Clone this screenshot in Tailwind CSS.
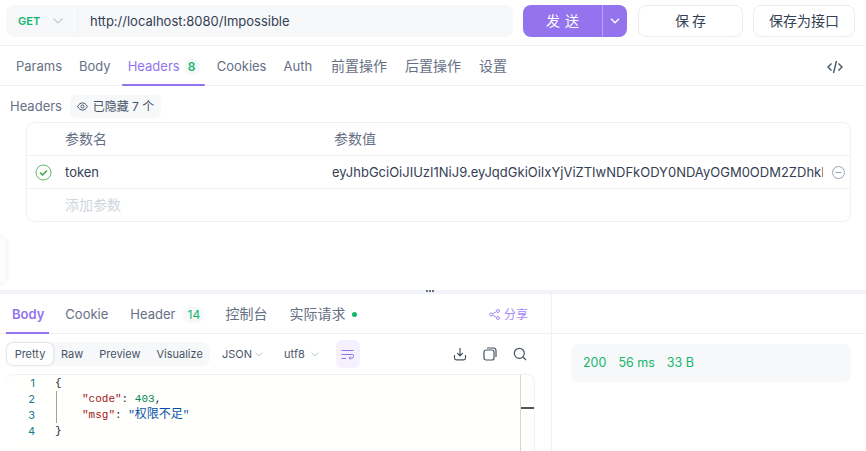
<!DOCTYPE html>
<html lang="en">
<head>
  <meta charset="UTF-8">
  <title>Request</title>
  <script src="https://cdn.jsdelivr.net/npm/@tailwindcss/browser@4"></script>
</head>
<body class="bg-white w-[866px] h-[451px] overflow-hidden relative text-[13px] text-[#667085] font-['Inter','Noto_Sans_CJK_SC',sans-serif]">

  <!-- url bar -->
  <div class="h-[46px] border-b border-[#f0f1f5] flex items-start pt-[5px] pl-[6px]">
    <div class="w-[507px] h-[32px] bg-[#f7f8fa] rounded-lg flex items-center">
      <div class="w-[72px] h-full border-r border-[#f2f3f5] flex items-center pl-[12px] gap-[13px] shrink-0">
        <span class="text-[11px] font-semibold text-[#12b76a]">GET</span>
        <svg width="10" height="6" viewBox="0 0 10 6" fill="none" stroke="#c4c8d0" stroke-width="1.1"><path d="M.5.5 5 5 9.5.5"/></svg>
      </div>
      <span class="pl-[12px] pt-[1px] text-[#344054]">http://localhost:8080/Impossible</span>
    </div>
    <div class="ml-[10px] w-[104px] h-[32px] bg-[#9373ee] rounded-lg flex text-white text-[14px]">
      <div class="w-[80px] flex items-center justify-center border-r border-[#b7a3f5] tracking-[5px] pl-[5px] pb-[2px]">发送</div>
      <div class="flex-1 flex items-center justify-center">
        <svg width="10" height="6" viewBox="0 0 10 6" fill="none" stroke="white" stroke-width="1.4"><path d="M1 .8 5 4.8 9 .8"/></svg>
      </div>
    </div>
    <div class="ml-[11px] w-[105px] h-[32px] border border-[#eaecf0] rounded-lg flex items-center justify-center text-[#344054] text-[14px] tracking-[3px] pl-[3px] pb-[2px]">保存</div>
    <div class="ml-[10px] w-[102px] h-[32px] border border-[#eaecf0] rounded-lg flex items-center justify-center text-[#344054] text-[14px] pb-[2px]">保存为接口</div>
  </div>

  <!-- request tabs -->
  <div class="h-[40px] border-b border-[#f0f1f5] flex items-center pt-[2px] pl-[16px] pr-[23px] relative">
    <span class="mr-[17px]">Params</span>
    <span class="mr-[17px]">Body</span>
    <span class="text-[#9373ee]">Headers</span>
    <span class="ml-[4px] w-[16px] h-[16px] rounded-full bg-[#f7f8fa] text-[#12b76a] text-[12px] font-semibold flex items-center justify-center mr-[17px]">8</span>
    <span class="mr-[17px]">Cookies</span>
    <span class="mr-[19px]">Auth</span>
    <span class="mr-[18px] text-[14px] pb-[2px]">前置操作</span>
    <span class="mr-[18px] text-[14px] pb-[2px]">后置操作</span>
    <span class="text-[14px] pb-[2px]">设置</span>
    <svg class="ml-auto" width="16" height="14" viewBox="0 0 16 14" fill="none" stroke="#475467" stroke-width="1.4"><path d="M4.5 3.5 1 7l3.5 3.5M11.5 3.5 15 7l-3.5 3.5M9.5 1 6.5 13"/></svg>
    <div class="absolute left-[122px] bottom-[-1px] w-[83px] h-[2px] bg-[#9373ee] rounded-full"></div>
  </div>

  <!-- hidden headers -->
  <div class="h-[36px] flex items-center pl-[10px] pt-[5px]">
    <span class="pt-[1px]">Headers</span>
    <div class="ml-[8px] h-[23px] w-[91px] bg-[#f7f8fa] rounded-md flex items-center justify-center gap-[5px] text-[#475467] text-[12px]">
      <svg width="11" height="9" viewBox="0 0 11 9" fill="none" stroke="#475467" stroke-width="1"><path d="M.6 4.5C2 2 3.6.9 5.5.9S9 2 10.400 4.5C9 7 7.400 8.100 5.500 8.100S2 7 .6 4.5Z"/><circle cx="5.5" cy="4.5" r="1.6"/></svg>
      <span>已隐藏 7 个</span>
    </div>
  </div>

  <!-- table -->
  <div class="ml-[26px] w-[825px] h-[100px] border border-[#f0f1f5] rounded-lg">
    <div class="h-[33px] border-b border-[#f0f1f5] flex items-center pl-[38px] pb-[2px] text-[14px]">
      <span class="w-[269px]">参数名</span>
      <span>参数值</span>
    </div>
    <div class="h-[33px] border-b border-[#f0f1f5] flex items-center pl-[8px]">
      <svg class="shrink-0" width="17" height="17" viewBox="0 0 17 17" fill="none"><circle cx="8.5" cy="8.5" r="7.5" stroke="#5cb85c" stroke-width="1"/><path d="M5 8.5 7.500 11 12 6.500" stroke="#3fa14a" stroke-width="1.5"/></svg>
      <span class="ml-[13px] w-[268px] pt-[1px] text-[#344054] shrink-0">token</span>
      <span class="w-[491px] pt-[1px] overflow-hidden whitespace-nowrap text-[#344054] shrink-0 ml-[-1px]">eyJhbGciOiJIUzI1NiJ9.eyJqdGkiOiIxYjViZTIwNDFkODY0NDAyOGM0ODM2ZDhkNjY</span>
      <svg class="ml-[9px] shrink-0" width="13" height="13" viewBox="0 0 13 13" fill="none" stroke="#98a2b3" stroke-width="1"><circle cx="6.5" cy="6.5" r="6"/><path d="M3.5 6.5h6"/></svg>
    </div>
    <div class="h-[32px] flex items-center pl-[38px] pb-[2px] text-[#d0d5dd] text-[14px]">添加参数</div>
  </div>

  <!-- floating handle at left edge -->
  <div class="absolute left-[-8px] top-[237px] w-[14px] h-[46px] rounded-md bg-[#fdfdfe] shadow-[0_0_4px_rgba(16,24,40,0.10)]"></div>

  <!-- splitter -->
  <div class="absolute left-0 top-[290px] w-full h-[4px] bg-[#f2f3f7]">
    <div class="absolute left-[426px] top-[0px] flex gap-[1px]">
      <i class="block w-[2px] h-[2px] bg-[#667085]"></i><i class="block w-[2px] h-[2px] bg-[#667085]"></i><i class="block w-[2px] h-[2px] bg-[#667085]"></i>
    </div>
  </div>

  <!-- response -->
  <div class="absolute left-0 top-[294px] w-full h-[157px] flex">
    <div class="w-[552px] border-r border-[#f0f1f5] shrink-0">
      <div class="h-[40px] border-b border-[#f0f1f5] flex items-center pt-[2px] pl-[12px] pr-[23px] relative">
        <span class="text-[#9373ee] font-semibold mr-[21px]">Body</span>
        <span class="mr-[22px]">Cookie</span>
        <span>Header</span>
        <span class="ml-[8px] w-[21px] h-[16px] rounded-full bg-[#f7f8fa] text-[#12b76a] text-[12px] flex items-center justify-center mr-[21px]">14</span>
        <span class="mr-[22px] text-[14px] pb-[2px]">控制台</span>
        <span class="text-[14px] pb-[2px]">实际请求</span>
        <i class="block ml-[7px] w-[5px] h-[5px] rounded-full bg-[#12b76a]"></i>
        <div class="ml-auto flex items-center gap-[4px] text-[#a78bfa] text-[12px]">
          <svg width="11" height="11" viewBox="0 0 11 11" fill="none" stroke="#a78bfa" stroke-width="1"><circle cx="2" cy="5.5" r="1.5"/><circle cx="9" cy="2" r="1.5"/><circle cx="9" cy="9" r="1.5"/><path d="M3.400 4.800 7.600 2.700M3.400 6.200l4.200 2.100"/></svg>
          <span>分享</span>
        </div>
        <div class="absolute left-[6px] bottom-[-1px] w-[43px] h-[2px] bg-[#9373ee]"></div>
      </div>

      <!-- toolbar -->
      <div class="h-[40px] flex items-center pl-[6px] text-[11px] relative">
        <div class="h-[24px] w-[204px] bg-[#f7f8fa] rounded-lg flex items-center px-[1px] text-[#475467]">
          <span class="h-[22px] w-[46px] bg-white rounded-md shadow-[0_0_3px_rgba(16,24,40,0.2)] flex items-center justify-center">Pretty</span>
          <span class="ml-[8px]">Raw</span>
          <span class="ml-[16px]">Preview</span>
          <span class="ml-[16px]">Visualize</span>
        </div>
        <span class="ml-[12px] text-[#475467]">JSON</span>
        <svg class="ml-[3px]" width="8" height="5" viewBox="0 0 8 5" fill="none" stroke="#c4c8d0"><path d="M.5.5 4 4 7.500.5"/></svg>
        <span class="ml-[21px] text-[#475467]">utf8</span>
        <svg class="ml-[6px]" width="8" height="5" viewBox="0 0 8 5" fill="none" stroke="#c4c8d0"><path d="M.5.5 4 4 7.500.5"/></svg>
        <div class="ml-[17px] w-[24px] h-[28px] rounded-md bg-[#f4f0fe] flex items-center justify-center">
          <svg width="13" height="11" viewBox="0 0 13 11" fill="none" stroke="#9373ee" stroke-width="1"><path d="M.5 1.500h12M.5 5.500h10.500a1.800 1.800 0 0 1 0 3.600H8M9.500 7.700 8 9.100l1.500 1.400M.5 9.500h4.500"/></svg>
        </div>
        <svg class="absolute left-[453px] top-[13px]" width="14" height="14" viewBox="0 0 14 14" fill="none" stroke="#475467" stroke-width="1.200"><path d="M7 1v7.500M4.200 6 7 8.800 9.800 6M1.500 8v3a1.800 1.800 0 0 0 1.800 1.800h7.400a1.800 1.800 0 0 0 1.800-1.800V8"/></svg>
        <svg class="absolute left-[483px] top-[13px]" width="14" height="14" viewBox="0 0 14 14" fill="none" stroke="#475467" stroke-width="1.200"><rect x="1" y="3" width="10" height="10" rx="2"/><path d="M4 1h6.500A2.500 2.500 0 0 1 13 3.500V10"/></svg>
        <svg class="absolute left-[513px] top-[13px]" width="14" height="14" viewBox="0 0 14 14" fill="none" stroke="#475467" stroke-width="1.200"><circle cx="6.300" cy="6.300" r="5"/><path d="m10 10 3 3"/></svg>
      </div>

      <!-- editor -->
      <div class="ml-[6px] w-[529px] h-[77px] border-t border-r border-[#f0f1f5] rounded-t-lg relative font-['Liberation_Mono','Noto_Sans_CJK_SC',monospace] text-[11px] leading-[16px] bg-[#fffffd]">
        <div class="flex"><span class="w-[29px] text-right text-[#237893] font-['Inter']">1</span><span class="ml-[20px] text-[#24292e]">{</span></div>
        <div class="flex"><span class="w-[29px] text-right text-[#237893] font-['Inter']">2</span><span class="ml-[20px] pl-[27px] whitespace-pre"><span class="text-[#a31515]">"code"</span><span class="text-[#24292e]">: </span><span class="text-[#098658]">403</span><span class="text-[#24292e]">,</span></span></div>
        <div class="flex"><span class="w-[29px] text-right text-[#237893] font-['Inter']">3</span><span class="ml-[20px] pl-[27px] whitespace-pre"><span class="text-[#a31515]">"msg"</span><span class="text-[#24292e]">: </span><span class="text-[#0451a5]">"<span class="text-[12px]">权限不足</span>"</span></span></div>
        <div class="flex"><span class="w-[29px] text-right text-[#237893] font-['Inter']">4</span><span class="ml-[20px] text-[#24292e]">}</span></div>
        <div class="absolute left-[50px] top-[16px] w-px h-[32px] bg-[#a0a0a0]"></div>
        <div class="absolute left-[514px] top-0 bottom-0 w-px bg-[#d4d4d4]"></div>
        <div class="absolute left-[515px] top-[32px] w-[13px] h-[2px] bg-[#555]"></div>
      </div>
    </div>

    <!-- right pane -->
    <div class="flex-1">
      <div class="h-[40px] border-b border-[#f0f1f5]"></div>
      <div class="ml-[19px] mt-[10px] w-[280px] h-[38px] bg-[#f7f8fa] rounded-lg flex items-center pt-[1px] pl-[12px] gap-[12px] text-[12.5px] text-[#12b76a]">
        <span>200</span><span>56 ms</span><span>33 B</span>
      </div>
    </div>
  </div>

</body>
</html>
